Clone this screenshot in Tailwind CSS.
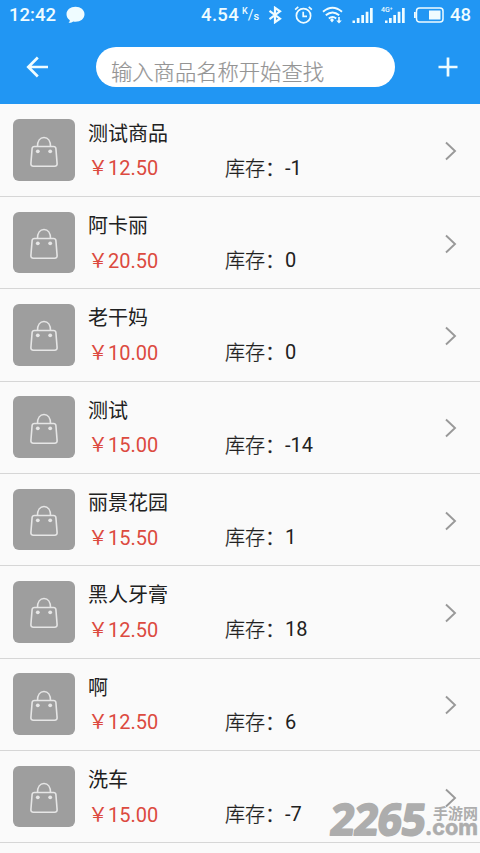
<!DOCTYPE html>
<html lang="zh-CN">
<head>
<meta charset="utf-8">
<title>商品</title>
<script src="https://cdn.jsdelivr.net/npm/@tailwindcss/browser@4"></script>
</head>
<body class="relative h-[853px] w-[480px] overflow-hidden bg-[#fafafa] font-[Roboto,'Noto_Sans_CJK_SC',sans-serif]">
<svg class="hidden">
  <symbol id="bag" viewBox="0 0 30 34"><g fill="none" stroke="#e6e6e6" stroke-width="1.600"><path d="M5.400 11.500h19.200q2 0 2.300 2l1.200 15q.2 2.700-2.500 2.700H4.400q-2.700 0-2.500-2.700l1.200-15q.3-2 2.300-2Z"/><path d="M8.500 11.500C8.500 6 11 2.500 15 2.500S21.500 6 21.500 11.500"/></g><circle cx="8.800" cy="16.300" r="1.900" fill="#e6e6e6"/><circle cx="21.200" cy="16.300" r="1.900" fill="#e6e6e6"/></symbol>
  <symbol id="chev" viewBox="0 0 14 20"><path d="M2 1.500 11 10 2 18.500" fill="none" stroke="#999" stroke-width="1.900"/></symbol>
</svg>
<header class="h-[104px] bg-[#2196f3] text-[#effcff]">
  <div class="flex h-[30px] items-center pl-[9px] pr-[8px] text-[18.500px] font-medium leading-[30px]">
    <span class="w-[48px]">12:42</span>
    <svg class="ml-[9px] h-[18px] w-[19px]" viewBox="0 0 19 18"><path fill="currentColor" d="M9.500.8C4.400.8.500 3.900.500 8.200c0 2.500 1.300 4.600 3.300 6 0 1-.6 1.900-1.300 2.600 2 .2 3.600-.4 4.800-1.300 6.300 1 11.200-2.300 11.200-7.300C18.500 3.900 14.600.8 9.500.8Z"/></svg>
    <span class="ml-auto tracking-[.3px]">4.54</span>
    <span class="ml-[3px] flex h-[20px] w-[17px] items-start text-[11px] leading-[12px]"><span class="text-[9px] leading-[12px]">K</span><span class="pt-[4px] text-[14px] font-normal">/</span><span class="pt-[6px] text-[11px]">s</span></span>
    <svg class="ml-[9px] h-[18px] w-[14px]" viewBox="0 0 14 18"><path d="M1.500 4.800 12 12.700 7 16.200V1.800l5 3.500L1.500 13.200" fill="none" stroke="currentColor" stroke-width="2.200"/></svg>
    <svg class="ml-[12px] h-[20px] w-[19px]" viewBox="0 0 20 20"><g fill="none" stroke="currentColor" stroke-width="1.800"><circle cx="10" cy="10.700" r="7.500"/><path d="M9.700 6.500v5h4M1.200 4.300 4.500 1.500M18.800 4.300 15.500 1.500"/></g></svg>
    <svg class="ml-[9px] h-[18px] w-[21px]" viewBox="0 0 21 18"><g fill="none" stroke="currentColor" stroke-width="1.900"><path d="M1 5.800Q10.500-2.200 20 5.800M3.800 9.200q6.700-5.600 13.400 0M6.800 12.500q3.700-3 7.400 0"/></g><path fill="currentColor" d="m8 14 2-2 2 2-2 2.500zM16.200 11h1.600v3.500h2L17 17.500l-2.800-3h2z"/></svg>
    <svg class="ml-[9px] h-[17px] w-[22px]" viewBox="0 0 22 17"><path fill="currentColor" d="M.5 13.500h2.500v2.500H.500zM4.800 11h2.700v5H4.800zM9.300 8H12v8H9.300zM13.700 4.800h2.700V16h-2.700zM18 1h2.700v15H18z"/></svg>
    <span class="relative ml-[7px] h-[17px] w-[25px]"><svg class="h-[17px] w-[26px]" viewBox="0 0 26 17"><path fill="currentColor" d="M4 13.500h2.500v2.500H4zM8 11h2.700v5H8zM12.300 8H15v8h-2.700zM16.700 4.800h2.700V16h-2.700zM21 1h2.700v15H21z"/></svg><span class="absolute left-0 top-0 text-[7px] leading-[7px]">4G⁺</span></span>
    <svg class="ml-[7px] h-[16px] w-[31px]" viewBox="0 0 31 16"><rect x="3.500" y="1" width="26.500" height="14" rx="3" fill="none" stroke="currentColor" stroke-width="1.500"/><path fill="currentColor" d="M1 5h1.800v6H1zM16 3.500h11.500v9H16z"/></svg>
    <span class="ml-[6px] w-[22px]">48</span>
  </div>
  <div class="flex h-[74px] items-center">
    <svg class="mb-[1px] ml-[26px] h-[22px] w-[23px]" viewBox="0 0 23 22"><path d="M22 11H2.500M11.800 1.500 2.300 11l9.500 9.500" fill="none" stroke="currentColor" stroke-width="2.700"/></svg>
    <div class="mb-[1px] ml-[47px] h-[40px] w-[299px] rounded-full bg-white pl-[15px] pt-[6px] text-[21.300px] font-light leading-[40px] text-[#949494] [-webkit-text-stroke:.2px_#949494]">输入商品名称开始查找</div>
    <svg class="ml-[43px] h-[20px] w-[20px]" viewBox="0 0 20 20"><path d="M10 .500v19M.500 10h19" fill="none" stroke="currentColor" stroke-width="2.700"/></svg>
  </div>
</header>
<ul id="list" class="pt-[.7px]"></ul>
<div class="absolute left-[328px] top-[793px] h-[52px] w-[152px] text-[#adadad]">
  <svg class="h-[52px] w-[152px] overflow-visible" viewBox="0 -2 152 52" fill="currentColor"><g stroke="currentColor" stroke-linejoin="round"><text x="0" y="40" font-family="Open Sans" font-weight="700" font-size="43" stroke-width="2.200" textLength="95" lengthAdjust="spacingAndGlyphs" transform="translate(6 0) skewX(-7)">2265</text><text x="97" y="40" font-family="Inter" font-weight="700" font-size="22" stroke-width=".6" textLength="53" lengthAdjust="spacingAndGlyphs">.com</text></g><text x="105" y="24" font-family="Noto Sans CJK SC" font-weight="700" font-size="14.500" textLength="45" lengthAdjust="spacingAndGlyphs">手游网</text></svg>
</div>
<script>
const items=[['测试商品','12.50','-1'],['阿卡丽','20.50','0'],['老干妈','10.00','0'],['测试','15.00','-14'],['丽景花园','15.50','1'],['黑人牙膏','12.50','18'],['啊','12.50','6'],['洗车','15.00','-7']];
document.getElementById('list').innerHTML=items.map(([name,price,stock])=>`
<li class="flex h-[92.330px] border-b border-[#d6d6d6] pl-[13px] pt-[14.600px] text-[#212121]">
  <div class="flex h-[61.600px] w-[61.600px] shrink-0 items-center justify-center rounded-[6px] bg-[#9e9e9e]"><svg class="mt-[3px] h-[34px] w-[30px]"><use href="#bag"/></svg></div>
  <div class="ml-[13.400px] w-[340px] text-[20px]">
    <div class="-mt-[.6px] h-[30px] leading-[30px]">${name}</div>
    <div class="mt-[3.600px] flex h-[30px] leading-[30px]"><span class="w-[137px] text-[#dc4a3f]"><span class="inline-block w-[20px] font-['Noto_Sans_CJK_SC',sans-serif]">￥</span>${price}</span><span class="pt-[1.500px] font-light [-webkit-text-stroke:.3px_#212121]">库存：</span><span class="pt-[.5px]">${stock}</span></div>
  </div>
  <svg class="ml-[16px] mt-[22px] h-[20px] w-[14px]"><use href="#chev"/></svg>
</li>`).join('');
</script>
</body>
</html>
